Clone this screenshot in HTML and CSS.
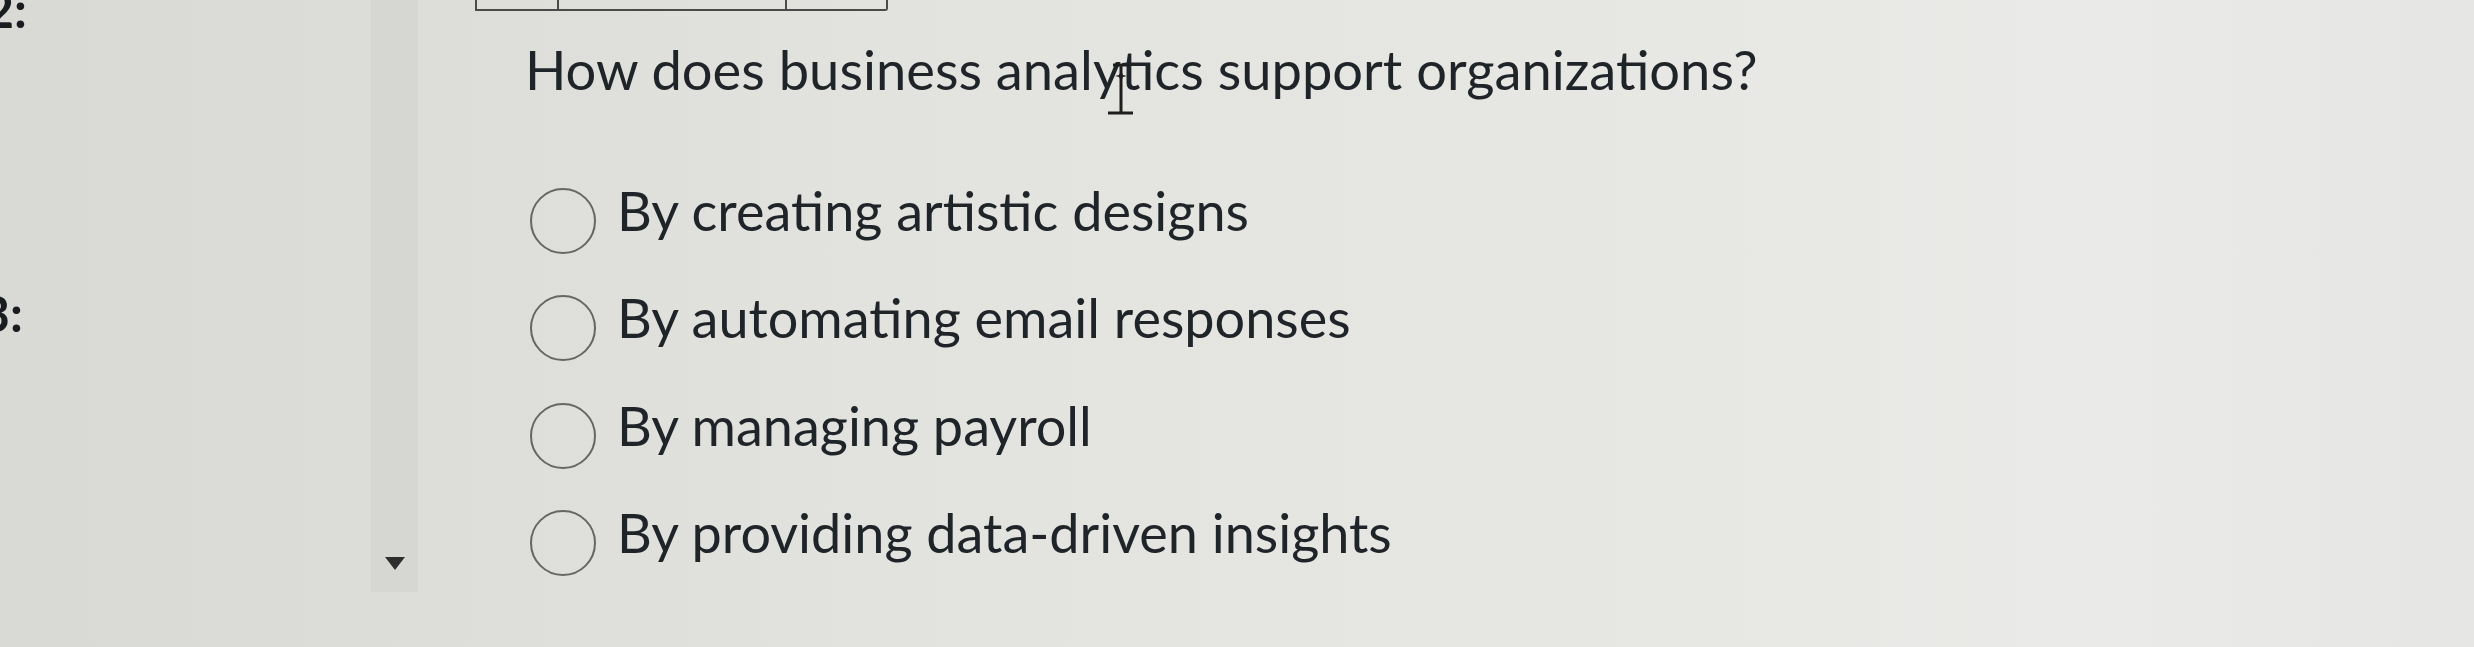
FILE: index.html
```html
<!DOCTYPE html>
<html lang="en">
<head>
<meta charset="utf-8">
<title>Quiz question</title>
<link rel="stylesheet" href="styles.css">
</head>
<body>
<div class="page">
  <aside class="side">
    <div class="qlabel qlabel-top">2:</div>
    <div class="qlabel qlabel-mid">3:</div>
  </aside>
  <div class="strip">
    <span class="strip-arrow"></span>
  </div>
  <main class="main">
    <div class="topbox">
      <span class="cell cell-a"></span>
      <span class="cell cell-b"></span>
      <span class="cell cell-c"></span>
    </div>
    <h1 class="question">How does business analytics support organizations?</h1>
    <ul class="options">
      <li class="option"><span class="radio"></span><span class="label">By creating artistic designs</span></li>
      <li class="option"><span class="radio"></span><span class="label">By automating email responses</span></li>
      <li class="option"><span class="radio"></span><span class="label">By managing payroll</span></li>
      <li class="option"><span class="radio"></span><span class="label">By providing data-driven insights</span></li>
    </ul>
    <svg class="ibeam" width="28" height="54" viewBox="0 0 28 54" aria-hidden="true">
      <path d="M6 3 H23 M14 3 V51 M1 51 H26" stroke="#1e1e1e" stroke-width="3" fill="none"/>
      <path d="M14 9 L16 13 L20 14 L16 15 L14 19 L12 15 L8 14 L12 13 Z" fill="#1e1e1e"/>
    </svg>
  </main>
</div>
</body>
</html>
```
FILE: styles.css
```css
html, body {
  margin: 0;
  padding: 0;
}
body {
  width: 2474px;
  height: 647px;
  overflow: hidden;
  font-family: Lato, "Open Sans", sans-serif;
  color: #1f2428;
  background: linear-gradient(90deg, #d9d9d6 0%, #dcdcd9 15%, #e2e2df 35%, #e6e6e3 60%, #eaeae8 85%, #e6e6e4 100%);
}
.page {
  display: flex;
  height: 647px;
}
.side {
  width: 371px;
  flex: none;
  display: flex;
  flex-direction: column;
}
.qlabel {
  font-size: 50px;
  font-weight: 700;
  line-height: 60px;
  height: 60px;
  color: #1a1d20;
}
.qlabel-top {
  margin-top: -21px;
  margin-left: -15px;
}
.qlabel-mid {
  margin-top: 244px;
  margin-left: -19px;
}
.strip {
  width: 47px;
  height: 592px;
  flex: none;
  background: #d6d6d3;
  display: flex;
  flex-direction: column;
  justify-content: flex-end;
  align-items: center;
}
.strip-arrow {
  width: 0;
  height: 0;
  border-left: 10px solid transparent;
  border-right: 10px solid transparent;
  border-top: 13px solid #2e2e2e;
  margin-bottom: 22px;
}
.main {
  position: relative;
  flex: 1;
  padding-left: 57px;
}
.topbox {
  display: flex;
  width: 413px;
  height: 11px;
  border: 2px solid #4a4a4a;
  border-top: none;
  border-bottom-right-radius: 3px;
  box-sizing: border-box;
}
.cell {
  height: 100%;
  box-sizing: border-box;
}
.cell-a { width: 82px; border-right: 2px solid #4a4a4a; }
.cell-b { width: 228px; border-right: 2px solid #4a4a4a; }
.cell-c { flex: 1; }
.question {
  margin: 26px 0 0 50px;
  font-size: 54.3px;
  font-weight: 400;
  line-height: 64px;
  color: #1f2428;
}
.options {
  list-style: none;
  margin: 78px 0 0 55px;
  padding: 0;
  display: flex;
  flex-direction: column;
  gap: 43.3px;
}
.option {
  display: flex;
  align-items: flex-start;
  gap: 21px;
  height: 64px;
}
.radio {
  width: 66px;
  height: 66px;
  flex: none;
  box-sizing: border-box;
  border: 2.5px solid #666;
  border-radius: 50%;
  margin-top: 9px;
}
.label {
  font-size: 54px;
  line-height: 64px;
  color: #1f2428;
}
.ibeam {
  position: absolute;
  left: 689px;
  top: 62px;
}
```
